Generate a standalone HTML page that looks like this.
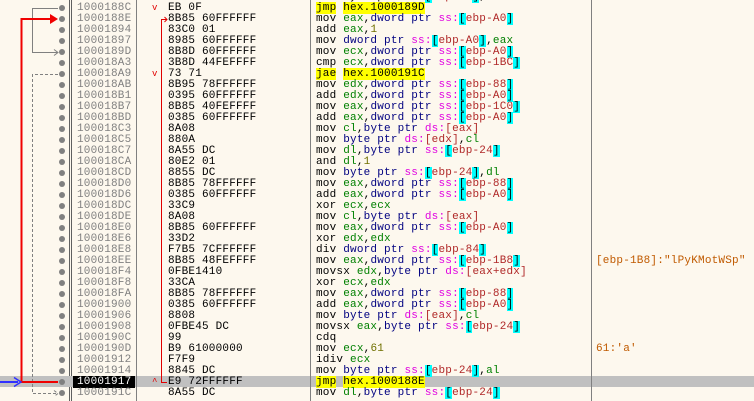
<!DOCTYPE html>
<html><head><meta charset="utf-8"><style>
body{margin:0;width:754px;height:401px;overflow:hidden;background:#fdf8ee;position:relative;font-family:"Liberation Mono",monospace;font-size:11px;letter-spacing:0.2px}
.r{position:absolute;left:0;width:754px;height:11px;line-height:12px;white-space:pre}
.ad{position:absolute;left:77px;color:#808080}
.by{position:absolute;left:168px;color:#000}
.in{position:absolute;left:316px;color:#000}
.cm{position:absolute;left:596px;color:#c05a00}
.g{color:#008000}.p{color:#000080}.s{color:#e000e0}.b{background:#00ffff}.a{color:#b02828}.n{color:#707000}.j{background:#ffff00}
.v{position:absolute;left:152px;color:#e00000;font-size:9px}
.hl{background:#c0c0c0}
.ln{position:absolute;top:0;height:401px;width:1px;background:#808080}
</style></head><body>
<div class="ln" style="left:69px;background:#606060"></div>
<div class="ln" style="left:71px;background:#606060"></div>
<div class="r hl" style="top:376px"></div>
<div class="ln" style="left:136px"></div>
<div class="ln" style="left:310px"></div>
<div class="ln" style="left:591px"></div>
<svg style="position:absolute;left:0;top:0" width="754" height="401">
<g fill="#808080">
<circle cx="62" cy="-3" r="3"/>
<circle cx="62" cy="8" r="3"/><circle cx="62" cy="19" r="3"/><circle cx="62" cy="30" r="3"/><circle cx="62" cy="41" r="3"/><circle cx="62" cy="52" r="3"/><circle cx="62" cy="63" r="3"/><circle cx="62" cy="74" r="3"/><circle cx="62" cy="85" r="3"/><circle cx="62" cy="96" r="3"/><circle cx="62" cy="107" r="3"/><circle cx="62" cy="118" r="3"/><circle cx="62" cy="129" r="3"/><circle cx="62" cy="140" r="3"/><circle cx="62" cy="151" r="3"/><circle cx="62" cy="162" r="3"/><circle cx="62" cy="173" r="3"/><circle cx="62" cy="184" r="3"/><circle cx="62" cy="195" r="3"/><circle cx="62" cy="206" r="3"/><circle cx="62" cy="217" r="3"/><circle cx="62" cy="228" r="3"/><circle cx="62" cy="239" r="3"/><circle cx="62" cy="250" r="3"/><circle cx="62" cy="261" r="3"/><circle cx="62" cy="272" r="3"/><circle cx="62" cy="283" r="3"/><circle cx="62" cy="294" r="3"/><circle cx="62" cy="305" r="3"/><circle cx="62" cy="316" r="3"/><circle cx="62" cy="327" r="3"/><circle cx="62" cy="338" r="3"/><circle cx="62" cy="349" r="3"/><circle cx="62" cy="360" r="3"/><circle cx="62" cy="371" r="3"/><circle cx="62" cy="382" r="3"/><circle cx="62" cy="393" r="3"/>
</g>
<path d="M58 8.5H32.5V52.5H58M54 49.5L58 52.5L54 55.5" fill="none" stroke="#808080" stroke-width="1"/>
<path d="M58 74.5H32.5V393.5H58M54 390.5L58 393.5L54 396.5" fill="none" stroke="#808080" stroke-width="1" stroke-dasharray="3,2"/>
<path d="M58 382H21.5V19H52" fill="none" stroke="#f00000" stroke-width="2"/>
<path d="M50 14L58 19L50 24Z" fill="#f00000"/>
<path d="M0 382H18" stroke="#3030ff" stroke-width="2"/>
<path d="M14 377.5L21 382L14 386.5" fill="none" stroke="#3030ff" stroke-width="1.5"/>
<path d="M167 19.5H161.5V382.5H167M164.5 17L167 19.5L164.5 22" fill="none" stroke="#e00000" stroke-width="1"/>
</svg>
<div class="r" style="top:-9px"><span class="ad">10001889</span><span class="by">C685 1FFFFFFF 01</span><span class="in">mov byte ptr ss:<span class="b">[</span><span class="a">ebp-E1</span><span class="b">]</span>,<span class="n">1</span></span></div>
<div class="r" style="top:2px"><span class="ad">1000188C</span><span class="v">v</span><span class="by">EB 0F</span><span class="in"><span class="j">jmp</span> <span class="j">hex.1000189D</span></span></div>
<div class="r" style="top:13px"><span class="ad">1000188E</span><span class="by">8B85 60FFFFFF</span><span class="in">mov <span class="g">eax</span>,<span class="p">dword ptr</span> <span class="s">ss:</span><span class="b">[</span><span class="a">ebp-A0</span><span class="b">]</span></span></div>
<div class="r" style="top:24px"><span class="ad">10001894</span><span class="by">83C0 01</span><span class="in">add <span class="g">eax</span>,<span class="n">1</span></span></div>
<div class="r" style="top:35px"><span class="ad">10001897</span><span class="by">8985 60FFFFFF</span><span class="in">mov <span class="p">dword ptr</span> <span class="s">ss:</span><span class="b">[</span><span class="a">ebp-A0</span><span class="b">]</span>,<span class="g">eax</span></span></div>
<div class="r" style="top:46px"><span class="ad">1000189D</span><span class="by">8B8D 60FFFFFF</span><span class="in">mov <span class="g">ecx</span>,<span class="p">dword ptr</span> <span class="s">ss:</span><span class="b">[</span><span class="a">ebp-A0</span><span class="b">]</span></span></div>
<div class="r" style="top:57px"><span class="ad">100018A3</span><span class="by">3B8D 44FEFFFF</span><span class="in">cmp <span class="g">ecx</span>,<span class="p">dword ptr</span> <span class="s">ss:</span><span class="b">[</span><span class="a">ebp-1BC</span><span class="b">]</span></span></div>
<div class="r" style="top:68px"><span class="ad">100018A9</span><span class="v">v</span><span class="by">73 71</span><span class="in"><span class="j">jae</span> <span class="j">hex.1000191C</span></span></div>
<div class="r" style="top:79px"><span class="ad">100018AB</span><span class="by">8B95 78FFFFFF</span><span class="in">mov <span class="g">edx</span>,<span class="p">dword ptr</span> <span class="s">ss:</span><span class="b">[</span><span class="a">ebp-88</span><span class="b">]</span></span></div>
<div class="r" style="top:90px"><span class="ad">100018B1</span><span class="by">0395 60FFFFFF</span><span class="in">add <span class="g">edx</span>,<span class="p">dword ptr</span> <span class="s">ss:</span><span class="b">[</span><span class="a">ebp-A0</span><span class="b">]</span></span></div>
<div class="r" style="top:101px"><span class="ad">100018B7</span><span class="by">8B85 40FEFFFF</span><span class="in">mov <span class="g">eax</span>,<span class="p">dword ptr</span> <span class="s">ss:</span><span class="b">[</span><span class="a">ebp-1C0</span><span class="b">]</span></span></div>
<div class="r" style="top:112px"><span class="ad">100018BD</span><span class="by">0385 60FFFFFF</span><span class="in">add <span class="g">eax</span>,<span class="p">dword ptr</span> <span class="s">ss:</span><span class="b">[</span><span class="a">ebp-A0</span><span class="b">]</span></span></div>
<div class="r" style="top:123px"><span class="ad">100018C3</span><span class="by">8A08</span><span class="in">mov <span class="g">cl</span>,<span class="p">byte ptr</span> <span class="s">ds:</span><span class="a">[eax]</span></span></div>
<div class="r" style="top:134px"><span class="ad">100018C5</span><span class="by">880A</span><span class="in">mov <span class="p">byte ptr</span> <span class="s">ds:</span><span class="a">[edx]</span>,<span class="g">cl</span></span></div>
<div class="r" style="top:145px"><span class="ad">100018C7</span><span class="by">8A55 DC</span><span class="in">mov <span class="g">dl</span>,<span class="p">byte ptr</span> <span class="s">ss:</span><span class="b">[</span><span class="a">ebp-24</span><span class="b">]</span></span></div>
<div class="r" style="top:156px"><span class="ad">100018CA</span><span class="by">80E2 01</span><span class="in">and <span class="g">dl</span>,<span class="n">1</span></span></div>
<div class="r" style="top:167px"><span class="ad">100018CD</span><span class="by">8855 DC</span><span class="in">mov <span class="p">byte ptr</span> <span class="s">ss:</span><span class="b">[</span><span class="a">ebp-24</span><span class="b">]</span>,<span class="g">dl</span></span></div>
<div class="r" style="top:178px"><span class="ad">100018D0</span><span class="by">8B85 78FFFFFF</span><span class="in">mov <span class="g">eax</span>,<span class="p">dword ptr</span> <span class="s">ss:</span><span class="b">[</span><span class="a">ebp-88</span><span class="b">]</span></span></div>
<div class="r" style="top:189px"><span class="ad">100018D6</span><span class="by">0385 60FFFFFF</span><span class="in">add <span class="g">eax</span>,<span class="p">dword ptr</span> <span class="s">ss:</span><span class="b">[</span><span class="a">ebp-A0</span><span class="b">]</span></span></div>
<div class="r" style="top:200px"><span class="ad">100018DC</span><span class="by">33C9</span><span class="in">xor <span class="g">ecx</span>,<span class="g">ecx</span></span></div>
<div class="r" style="top:211px"><span class="ad">100018DE</span><span class="by">8A08</span><span class="in">mov <span class="g">cl</span>,<span class="p">byte ptr</span> <span class="s">ds:</span><span class="a">[eax]</span></span></div>
<div class="r" style="top:222px"><span class="ad">100018E0</span><span class="by">8B85 60FFFFFF</span><span class="in">mov <span class="g">eax</span>,<span class="p">dword ptr</span> <span class="s">ss:</span><span class="b">[</span><span class="a">ebp-A0</span><span class="b">]</span></span></div>
<div class="r" style="top:233px"><span class="ad">100018E6</span><span class="by">33D2</span><span class="in">xor <span class="g">edx</span>,<span class="g">edx</span></span></div>
<div class="r" style="top:244px"><span class="ad">100018E8</span><span class="by">F7B5 7CFFFFFF</span><span class="in">div <span class="p">dword ptr</span> <span class="s">ss:</span><span class="b">[</span><span class="a">ebp-84</span><span class="b">]</span></span></div>
<div class="r" style="top:255px"><span class="ad">100018EE</span><span class="by">8B85 48FEFFFF</span><span class="in">mov <span class="g">eax</span>,<span class="p">dword ptr</span> <span class="s">ss:</span><span class="b">[</span><span class="a">ebp-1B8</span><span class="b">]</span></span><span class="cm">[ebp-1B8]:"lPyKMotWSp"</span></div>
<div class="r" style="top:266px"><span class="ad">100018F4</span><span class="by">0FBE1410</span><span class="in">movsx <span class="g">edx</span>,<span class="p">byte ptr</span> <span class="s">ds:</span><span class="a">[eax+edx]</span></span></div>
<div class="r" style="top:277px"><span class="ad">100018F8</span><span class="by">33CA</span><span class="in">xor <span class="g">ecx</span>,<span class="g">edx</span></span></div>
<div class="r" style="top:288px"><span class="ad">100018FA</span><span class="by">8B85 78FFFFFF</span><span class="in">mov <span class="g">eax</span>,<span class="p">dword ptr</span> <span class="s">ss:</span><span class="b">[</span><span class="a">ebp-88</span><span class="b">]</span></span></div>
<div class="r" style="top:299px"><span class="ad">10001900</span><span class="by">0385 60FFFFFF</span><span class="in">add <span class="g">eax</span>,<span class="p">dword ptr</span> <span class="s">ss:</span><span class="b">[</span><span class="a">ebp-A0</span><span class="b">]</span></span></div>
<div class="r" style="top:310px"><span class="ad">10001906</span><span class="by">8808</span><span class="in">mov <span class="p">byte ptr</span> <span class="s">ds:</span><span class="a">[eax]</span>,<span class="g">cl</span></span></div>
<div class="r" style="top:321px"><span class="ad">10001908</span><span class="by">0FBE45 DC</span><span class="in">movsx <span class="g">eax</span>,<span class="p">byte ptr</span> <span class="s">ss:</span><span class="b">[</span><span class="a">ebp-24</span><span class="b">]</span></span></div>
<div class="r" style="top:332px"><span class="ad">1000190C</span><span class="by">99</span><span class="in">cdq</span></div>
<div class="r" style="top:343px"><span class="ad">1000190D</span><span class="by">B9 61000000</span><span class="in">mov <span class="g">ecx</span>,<span class="n">61</span></span><span class="cm">61:'a'</span></div>
<div class="r" style="top:354px"><span class="ad">10001912</span><span class="by">F7F9</span><span class="in">idiv <span class="g">ecx</span></span></div>
<div class="r" style="top:365px"><span class="ad">10001914</span><span class="by">8845 DC</span><span class="in">mov <span class="p">byte ptr</span> <span class="s">ss:</span><span class="b">[</span><span class="a">ebp-24</span><span class="b">]</span>,<span class="g">al</span></span></div>
<div class="r" style="top:376px"><span class="ad" style="background:#000;color:#fff;left:73px;padding:0 4px">10001917</span><span class="v">^</span><span class="by">E9 72FFFFFF</span><span class="in"><span class="j">jmp</span> <span class="j">hex.1000188E</span></span></div>
<div class="r" style="top:387px"><span class="ad">1000191C</span><span class="by">8A55 DC</span><span class="in">mov <span class="g">dl</span>,<span class="p">byte ptr</span> <span class="s">ss:</span><span class="b">[</span><span class="a">ebp-24</span><span class="b">]</span></span></div>
</body></html>
